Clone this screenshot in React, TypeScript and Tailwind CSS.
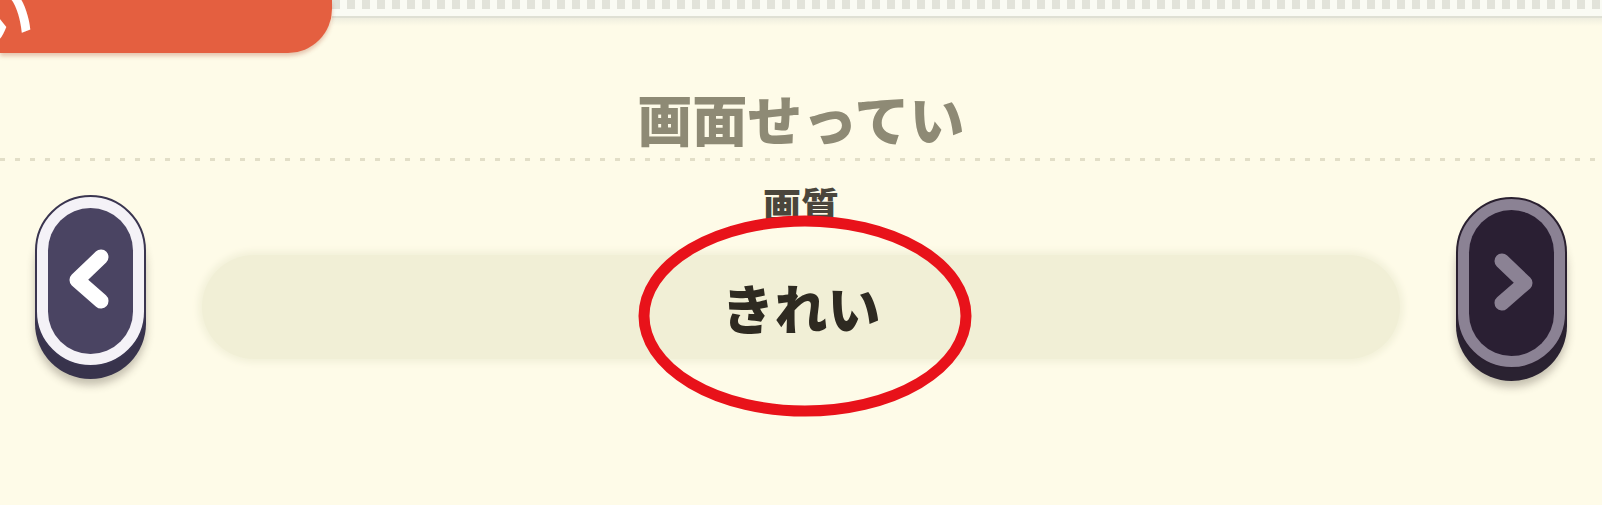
import React from "react";

function NavButton({ dir }: { dir: "left" | "right" }) {
  const isLeft = dir === "left";
  return (
    <div className="relative w-[111px] h-[184px] shrink-0">
      <div
        className={
          isLeft
            ? "absolute left-0 right-0 bottom-0 h-[172px] rounded-full bg-[#38334c] shadow-[0_6px_8px_rgba(60,50,40,0.3)]"
            : "absolute left-0 right-0 bottom-0 h-[172px] rounded-full bg-[#2a2231] shadow-[0_6px_8px_rgba(60,50,40,0.3)]"
        }
      />
      <div
        className={
          isLeft
            ? "absolute left-0 right-0 top-0 h-[172px] rounded-full border-2 border-[#3a3550] bg-[#f4f2f7] p-[11px]"
            : "absolute left-0 right-0 top-0 h-[172px] rounded-full border-2 border-[#2a2030] bg-[#8b8294] p-[11px]"
        }
      >
        <div
          className={
            isLeft
              ? "w-full h-full rounded-full bg-[#4a4462] flex items-center justify-center"
              : "w-full h-full rounded-full bg-[#2a1f33] flex items-center justify-center"
          }
        >
          <svg width="64" height="76" viewBox="0 0 64 76">
            {isLeft ? (
              <path
                d="M42 14 L18 37 L42 58"
                fill="none"
                stroke="#ffffff"
                strokeWidth="15"
                strokeLinecap="round"
                strokeLinejoin="round"
              />
            ) : (
              <path
                d="M22 16 L45 38 L22 58"
                fill="none"
                stroke="#8b8294"
                strokeWidth="15"
                strokeLinecap="round"
                strokeLinejoin="round"
              />
            )}
          </svg>
        </div>
      </div>
    </div>
  );
}

export default function App() {
  return (
    <div
      className="relative w-full h-[505px] overflow-hidden bg-[#fefbe8]"
      style={{ fontFamily: '"Noto Sans CJK JP", "Noto Sans", sans-serif' }}
    >
      {/* top bar */}
      <div className="flex items-start">
        <div className="relative w-[332px] h-[53px] shrink-0 rounded-br-[44px] bg-[#e45f40] overflow-hidden shadow-[0_3px_4px_rgba(170,70,40,0.3)] z-10">
          <span className="absolute left-[-30px] top-[-20px] text-[64px] font-bold leading-none text-white">
            い
          </span>
        </div>
        <div className="flex-1 flex flex-col">
          <div className="h-[16px] bg-[#fafbf4] flex flex-col">
            <div className="h-[9px] bg-[repeating-linear-gradient(90deg,#e2e3da_0px,#e2e3da_8px,transparent_8px,transparent_15px)]" />
          </div>
          <div className="h-[2px] bg-[#dfe0d4]" />
          <div className="h-[8px] bg-gradient-to-b from-[#efeedf] to-transparent" />
        </div>
      </div>

      {/* title */}
      <div className="flex flex-col items-center mt-[37px]">
        <h1 className="text-[55px] leading-none font-black text-[#8e8a75]">
          画面せってい
        </h1>
      </div>
      <div className="mt-[13px] h-[3px] w-full bg-[repeating-linear-gradient(90deg,#e2dec7_0px,#e2dec7_5px,transparent_5px,transparent_15px)]" />

      {/* setting row */}
      <div className="flex items-start px-[35px] mt-[24px] gap-[56px]">
        <div className="mt-[10px]">
          <NavButton dir="left" />
        </div>
        <div className="flex-1 flex flex-col items-center">
          <div className="text-[38px] leading-none font-black text-[#4a463c]">画質</div>
          <div className="mt-[32px] w-full h-[104px] rounded-full bg-[#f1efd6] shadow-[0_0_6px_4px_#f3f1da] flex items-center justify-center">
            <span className="text-[53px] leading-none font-black text-[#2e2a21]">きれい</span>
          </div>
        </div>
        <div className="mt-[12px]">
          <NavButton dir="right" />
        </div>
      </div>

      {/* red annotation ellipse */}
      <svg
        className="absolute left-[633px] top-[210px] pointer-events-none"
        width="344"
        height="212"
        viewBox="0 0 344 212"
      >
        <ellipse cx="172" cy="106" rx="161" ry="95" fill="none" stroke="#e8121a" strokeWidth="11" />
      </svg>
    </div>
  );
}
